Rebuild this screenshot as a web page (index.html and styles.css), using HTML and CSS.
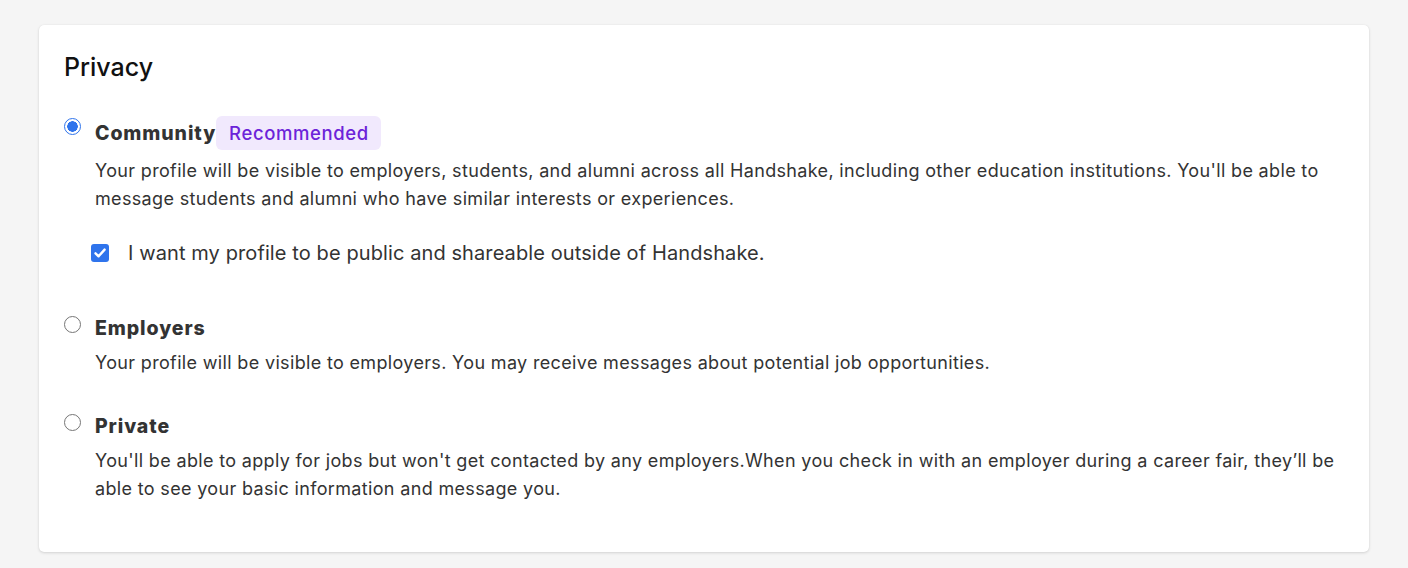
FILE: index.html
```html
<!DOCTYPE html>
<html lang="en">
<head>
<meta charset="utf-8">
<title>Privacy</title>
<link rel="stylesheet" href="styles.css">
</head>
<body>
<main class="page">
  <section class="card">
    <h2 class="title">Privacy</h2>

    <div class="option option-community">
      <div class="option-row">
        <span class="radio radio-checked"></span>
        <span class="option-label">Community</span>
        <span class="badge">Recommended</span>
      </div>
      <p class="option-desc">Your profile will be visible to employers, students, and alumni across all Handshake, including other education institutions. You'll be able to message students and alumni who have similar interests or experiences.</p>
      <div class="check-row">
        <span class="checkbox">
          <svg viewBox="0 0 18 18" width="18" height="18"><path d="M4.5 9.3 L7.6 12.3 L13.6 5.6" fill="none" stroke="#fff" stroke-width="2.4" stroke-linecap="round" stroke-linejoin="round"/></svg>
        </span>
        <span class="check-label">I want my profile to be public and shareable outside of Handshake.</span>
      </div>
    </div>

    <div class="option">
      <div class="option-row">
        <span class="radio"></span>
        <span class="option-label">Employers</span>
      </div>
      <p class="option-desc">Your profile will be visible to employers. You may receive messages about potential job opportunities.</p>
    </div>

    <div class="option">
      <div class="option-row">
        <span class="radio"></span>
        <span class="option-label">Private</span>
      </div>
      <p class="option-desc">You'll be able to apply for jobs but won't get contacted by any employers.When you check in with an employer during a career fair, they’ll be able to see your basic information and message you.</p>
    </div>
  </section>
</main>
</body>
</html>
```

FILE: styles.css
```css
* { box-sizing: border-box; }

html, body {
  margin: 0;
  padding: 0;
  background: #f5f5f5;
  font-family: Inter, "Noto Sans", "Liberation Sans", sans-serif;
  color: #333333;
}

.page {
  padding: 25px 39px 16px 39px;
}

.card {
  background: #ffffff;
  border-radius: 5px;
  box-shadow: 0 1px 3px rgba(0, 0, 0, 0.14), 0 0 1px rgba(0, 0, 0, 0.08);
  padding: 26px 25px 47px 25px;
  height: 527px;
}

.title {
  margin: 0 0 33px 0;
  font-size: 25px;
  line-height: 32px;
  font-weight: 500;
  color: #111111;
  letter-spacing: 0;
}

.option {
  margin-bottom: 35px;
}

.option:last-child {
  margin-bottom: 0;
}

.option-community {
  margin-bottom: 47px;
}

.option-row {
  display: flex;
  align-items: center;
  min-height: 28px;
}

.option-community .option-row {
  min-height: 34px;
}

.radio {
  width: 17px;
  height: 17px;
  border-radius: 50%;
  border: 1px solid #767676;
  background: #fff;
  margin-right: 14px;
  flex: none;
  position: relative;
  top: -4px;
}

.radio-checked {
  top: -7px;
  border: 1.5px solid #2f74ec;
  background: radial-gradient(circle, #2f74ec 0 5px, #ffffff 5.5px);
}

.option-label {
  font-size: 19.5px;
  line-height: 28px;
  font-weight: 800;
  letter-spacing: 0.9px;
  color: #333333;
}

.badge {
  display: inline-flex;
  align-items: center;
  height: 34px;
  padding: 0 12px 0 13px;
  border-radius: 6px;
  background: #f1e9fd;
  color: #6c23d9;
  font-size: 18.5px;
  font-weight: 500;
  letter-spacing: 0.6px;
  margin-left: 0;
}

.option-desc {
  margin: 7px 0 0 31px;
  font-size: 18px;
  line-height: 28px;
  letter-spacing: 0.34px;
  color: #333333;
  max-width: 1240px;
}

.check-row {
  display: flex;
  align-items: center;
  margin: 26px 0 0 27px;
  min-height: 28px;
}

.checkbox {
  width: 18px;
  height: 18px;
  border-radius: 3px;
  background: #2f74ec;
  display: inline-flex;
  align-items: center;
  justify-content: center;
  flex: none;
  margin-right: 19px;
}

.checkbox svg { display: block; }

.check-label {
  font-size: 20px;
  line-height: 28px;
  letter-spacing: 0.1px;
  color: #333333;
}
```
